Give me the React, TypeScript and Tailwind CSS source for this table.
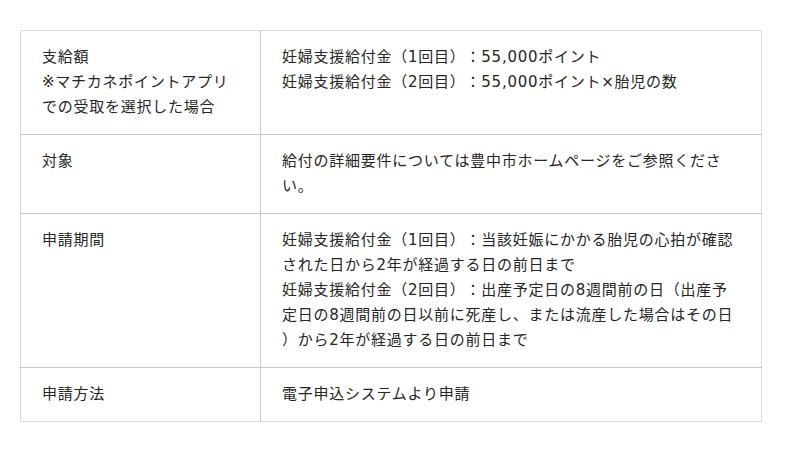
const rows: { label: string[]; body: string[] }[] = [
  {
    label: ["支給額", "※マチカネポイントアプリ", "での受取を選択した場合"],
    body: ["妊婦支援給付金（1回目）：55,000ポイント", "妊婦支援給付金（2回目）：55,000ポイント×胎児の数"],
  },
  {
    label: ["対象"],
    body: ["給付の詳細要件については豊中市ホームページをご参照くださ", "い。"],
  },
  {
    label: ["申請期間"],
    body: [
      "妊婦支援給付金（1回目）：当該妊娠にかかる胎児の心拍が確認",
      "された日から2年が経過する日の前日まで",
      "妊婦支援給付金（2回目）：出産予定日の8週間前の日（出産予",
      "定日の8週間前の日以前に死産し、または流産した場合はその日",
      "）から2年が経過する日の前日まで",
    ],
  },
  {
    label: ["申請方法"],
    body: ["電子申込システムより申請"],
  },
]

const Lines = ({ lines }: { lines: string[] }) => (
  <>
    {lines.map((l, i) => (
      <div key={i} className="whitespace-nowrap">
        {l}
      </div>
    ))}
  </>
)

export default function App() {
  return (
    <div
      className="w-[800px] h-[452px] bg-white pt-[30px] pl-[20px] text-[#252525] text-[15px] leading-[25px] tracking-[0.05em] [text-spacing-trim:space-all]"
      style={{ fontFamily: '"DejaVu Sans", "Noto Sans CJK JP", sans-serif' }}
    >
      <table className="w-[742px] border-collapse border border-[#dcdcdc]">
        <tbody>
          {rows.map((r, i) => (
            <tr key={i} className="border-b border-[#c8c8c8] last:border-b-[#dcdcdc]">
              <td className="w-[240px] align-top pl-[21px] pr-2 py-[14px] border-r border-[#c8c8c8]">
                <Lines lines={r.label} />
              </td>
              <td className="align-top pl-[21px] pr-4 py-[14px]">
                <Lines lines={r.body} />
              </td>
            </tr>
          ))}
        </tbody>
      </table>
    </div>
  )
}
